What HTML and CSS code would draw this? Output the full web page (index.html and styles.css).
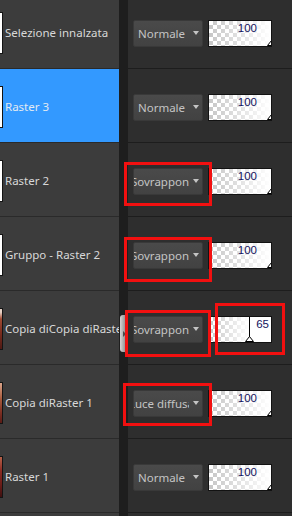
FILE: index.html
```html
<!DOCTYPE html>
<html lang="it">
<head>
<meta charset="utf-8">
<title>Livelli</title>
<link rel="stylesheet" href="styles.css">
</head>
<body>
<div class="panel">
  <div class="row first">
    <div class="layer"><span class="thumb"></span><span class="name">Selezione innalzata</span></div>
    <div class="split"></div>
    <div class="props">
      <div class="blend"><span class="blend-text"><span>Normale</span></span><span class="caret"></span></div>
      <div class="opacity" style="--v:100%"><span class="val">100</span><svg class="mark" width="9" height="25" viewBox="0 0 9 25"><path d="M4.5 0V20" stroke="#000"/><path d="M0.5 24.5L4.5 19.5L8.5 24.5Z" fill="#fff" stroke="#000"/></svg></div>
    </div>
  </div>
  <div class="row">
    <div class="layer sel"><span class="thumb"></span><span class="name">Raster 3</span></div>
    <div class="split"></div>
    <div class="props">
      <div class="blend"><span class="blend-text"><span>Normale</span></span><span class="caret"></span></div>
      <div class="opacity" style="--v:100%"><span class="val">100</span><svg class="mark" width="9" height="25" viewBox="0 0 9 25"><path d="M4.5 0V20" stroke="#000"/><path d="M0.5 24.5L4.5 19.5L8.5 24.5Z" fill="#fff" stroke="#000"/></svg></div>
    </div>
  </div>
  <div class="row">
    <div class="layer"><span class="thumb"></span><span class="name">Raster 2</span></div>
    <div class="split"></div>
    <div class="props">
      <div class="blend"><span class="blend-text"><span>Sovrapponi</span></span><span class="caret"></span></div>
      <div class="opacity" style="--v:100%"><span class="val">100</span><svg class="mark" width="9" height="25" viewBox="0 0 9 25"><path d="M4.5 0V20" stroke="#000"/><path d="M0.5 24.5L4.5 19.5L8.5 24.5Z" fill="#fff" stroke="#000"/></svg></div>
      <span class="mark-box box-a"></span>
    </div>
  </div>
  <div class="row">
    <div class="layer"><span class="thumb"></span><span class="name">Gruppo - Raster 2</span></div>
    <div class="split"></div>
    <div class="props">
      <div class="blend"><span class="blend-text"><span>Sovrapponi</span></span><span class="caret"></span></div>
      <div class="opacity" style="--v:100%"><span class="val">100</span><svg class="mark" width="9" height="25" viewBox="0 0 9 25"><path d="M4.5 0V20" stroke="#000"/><path d="M0.5 24.5L4.5 19.5L8.5 24.5Z" fill="#fff" stroke="#000"/></svg></div>
      <span class="mark-box box-b"></span>
    </div>
  </div>
  <div class="row">
    <div class="layer"><span class="thumb img-a"></span><span class="name">Copia diCopia diRaster 1</span></div>
    <div class="split"><span class="handle"><span class="handle-arrow"></span></span></div>
    <div class="props">
      <div class="blend"><span class="blend-text"><span>Sovrapponi</span></span><span class="caret"></span></div>
      <div class="opacity" style="--v:65%"><span class="val val-near">65</span><svg class="mark" width="9" height="25" viewBox="0 0 9 25"><path d="M4.5 0V20" stroke="#000"/><path d="M0.5 24.5L4.5 19.5L8.5 24.5Z" fill="#fff" stroke="#000"/></svg></div>
      <span class="mark-box box-c"></span>
      <span class="mark-box box-d"></span>
    </div>
  </div>
  <div class="row">
    <div class="layer"><span class="thumb img-b"></span><span class="name">Copia diRaster 1</span></div>
    <div class="split"></div>
    <div class="props">
      <div class="blend"><span class="blend-text"><span>Luce diffusa</span></span><span class="caret"></span></div>
      <div class="opacity" style="--v:100%"><span class="val">100</span><svg class="mark" width="9" height="25" viewBox="0 0 9 25"><path d="M4.5 0V20" stroke="#000"/><path d="M0.5 24.5L4.5 19.5L8.5 24.5Z" fill="#fff" stroke="#000"/></svg></div>
      <span class="mark-box box-e"></span>
    </div>
  </div>
  <div class="row">
    <div class="layer"><span class="thumb img-c"></span><span class="name">Raster 1</span></div>
    <div class="split"></div>
    <div class="props">
      <div class="blend"><span class="blend-text"><span>Normale</span></span><span class="caret"></span></div>
      <div class="opacity" style="--v:100%"><span class="val">100</span><svg class="mark" width="9" height="25" viewBox="0 0 9 25"><path d="M4.5 0V20" stroke="#000"/><path d="M0.5 24.5L4.5 19.5L8.5 24.5Z" fill="#fff" stroke="#000"/></svg></div>
    </div>
  </div>
  <div class="row">
    <div class="layer"></div>
    <div class="split"></div>
    <div class="props"></div>
  </div>
</div>
</body>
</html>
```
FILE: styles.css
```css
* { box-sizing: border-box; }
html, body {
  margin: 0;
  padding: 0;
  background: #2e2e2e;
  overflow: hidden;
}
.panel {
  width: 292px;
  height: 516px;
  overflow: hidden;
}
.row {
  display: grid;
  grid-template-columns: 119px 9px 1fr;
  height: 74px;
}
.row.first { margin-top: -5px; }

.layer {
  background: #3c3c3c;
  border-bottom: 1px solid #2a2a2a;
  display: flex;
  align-items: center;
  gap: 2px;
  padding-top: 2px;
  overflow: hidden;
}
.layer.sel { background: #3399ff; }
.thumb {
  flex: none;
  width: 3px;
  height: 42px;
  margin-top: 1px;
  background: #fff;
  border: 1px solid #141414;
  border-left: none;
}
.thumb.img-a { background: linear-gradient(#e6d2c6 0 8%, #a04a32 25%, #7a2c1e 60%, #4e1a14); }
.thumb.img-b { background: linear-gradient(#d9a48a, #a85a3c 40%, #7c2e22 75%, #5a1c16); }
.thumb.img-c { background: linear-gradient(#b7624a, #8a2a22 35%, #6a1c18 70%, #3e1010); }
.name {
  font-family: "Noto Sans", "DejaVu Sans", sans-serif;
  font-size: 11.5px;
  color: #d8d8d8;
  white-space: nowrap;
}
.layer.sel .name { color: #e2eaf2; }

.split {
  background: #1e1e1e;
  display: flex;
  align-items: flex-start;
}
.handle {
  margin: 24px 0 0 1px;
  width: 6px;
  height: 37px;
  border-radius: 3px 0 0 3px;
  background: linear-gradient(to right, #d6d6d6, #a8a8a8 60%, #8a8a8a);
  display: flex;
  align-items: center;
  justify-content: flex-end;
}
.handle-arrow {
  width: 0;
  height: 0;
  border-top: 3px solid transparent;
  border-bottom: 3px solid transparent;
  border-left: 3px solid #4a4a4a;
}

.props {
  position: relative;
  background: #2e2e2e;
  border-bottom: 1px solid #1d1d1d;
  display: flex;
  align-items: center;
  gap: 5px;
  padding: 3px 0 0 5px;
}
.blend {
  flex: none;
  width: 70px;
  height: 27px;
  background: linear-gradient(#4a4a4a, #424242);
  border: 1px solid #393939;
  border-radius: 2px;
  display: flex;
  align-items: center;
}
.blend-text {
  flex: none;
  width: 55px;
  display: flex;
  justify-content: center;
  overflow: hidden;
  white-space: nowrap;
  font-family: "Noto Sans", "DejaVu Sans", sans-serif;
  font-size: 11.5px;
  color: #c4c4c4;
}
.caret {
  margin-left: 4px;
  width: 0;
  height: 0;
  border-left: 3.5px solid transparent;
  border-right: 3.5px solid transparent;
  border-top: 4px solid #c4c4c4;
}
.opacity {
  position: relative;
  flex: none;
  width: 64px;
  height: 27px;
  border: 1px solid #121212;
  overflow: hidden;
  display: flex;
  justify-content: flex-end;
  align-items: flex-start;
  padding: 1px 14px 0 0;
  background:
    linear-gradient(to right, transparent var(--v), #fff var(--v)) 0 0 / 100% 100% no-repeat,
    linear-gradient(to right, rgba(255,255,255,0), #fff) 0 0 / var(--v) 100% no-repeat,
    conic-gradient(#c6c6c6 25%, #fff 0 50%, #c6c6c6 0 75%, #fff 0) 0 0 / 8px 8px,
    #fff;
}
.val {
  position: relative;
  font-family: "Liberation Sans", Arial, sans-serif;
  font-size: 11.5px;
  line-height: 13px;
  color: #14145e;
}
.val.val-near { margin-right: -12px; }
.mark {
  position: absolute;
  top: 0;
  left: calc(var(--v) - 4.5px);
}

.mark-box {
  position: absolute;
  border: 3px solid #f21010;
}
.box-a { left: -4px; top: 19px; width: 88px; height: 44px; }
.box-b { left: -4px; top: 20px; width: 88px; height: 45px; }
.box-c { left: -3px; top: 19px; width: 86px; height: 47px; }
.box-d { left: 87px; top: 12px; width: 70px; height: 52px; }
.box-e { left: -5px; top: 18px; width: 89px; height: 43px; }
```
